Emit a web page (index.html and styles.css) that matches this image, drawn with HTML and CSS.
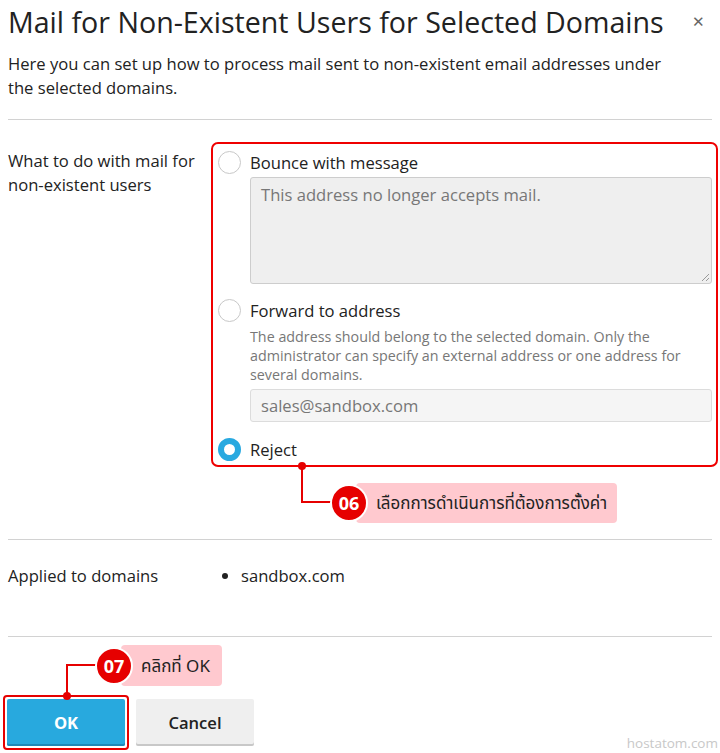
FILE: index.html
```html
<!DOCTYPE html>
<html>
<head>
<meta charset="utf-8">
<link rel="stylesheet" href="styles.css">
</head>
<body>
<div class="dialog">
  <div class="head">
    <h1 class="title">Mail for Non-Existent Users for Selected Domains</h1>
    <span class="close">&#x2715;</span>
  </div>
  <p class="intro">Here you can set up how to process mail sent to non-existent email addresses under the selected domains.</p>
  <hr class="sep">
  <div class="row row-opts">
    <div class="label">What to do with mail for non-existent users</div>
    <div class="field">
      <div class="hl-box">
        <label class="opt"><span class="radio"></span><span class="opt-text">Bounce with message</span></label>
        <div class="sub">
          <div class="textarea">This address no longer accepts mail.<span class="grip"></span></div>
        </div>
        <label class="opt"><span class="radio"></span><span class="opt-text">Forward to address</span></label>
        <div class="sub">
          <p class="hint">The address should belong to the selected domain. Only the administrator can specify an external address or one address for several domains.</p>
          <div class="input">sales@sandbox.com</div>
        </div>
        <label class="opt opt-last"><span class="radio on"></span><span class="opt-text">Reject</span></label>
        <span class="dot dot-06"></span>
        <span class="line06-v"></span>
        <span class="line06-h"></span>
      </div>
      <div class="callout callout-06"><span class="badge">06</span><span class="ctext">เลือกการดำเนินการที่ต้องการตั้งค่า</span></div>
    </div>
  </div>
  <hr class="sep sep2">
  <div class="row row-applied">
    <div class="label">Applied to domains</div>
    <ul class="domains"><li>sandbox.com</li></ul>
  </div>
  <hr class="sep sep3">
  <div class="footer">
    <div class="callout callout-07"><span class="badge">07</span><span class="ctext">คลิกที่ OK</span></div>
    <span class="line07-h"></span>
    <span class="line07-v"></span>
    <div class="buttons">
      <div class="ok-wrap"><button class="btn btn-ok">OK</button><span class="dot dot-07"></span></div>
      <button class="btn btn-cancel">Cancel</button>
    </div>
  </div>
  <div class="watermark">hostatom.com</div>
</div>
</body>
</html>
```
FILE: styles.css
```css
* { box-sizing: border-box; }
html, body { margin: 0; padding: 0; background: #fff; }
body {
  font-family: "Open Sans", "Noto Sans", sans-serif;
  color: #222;
  width: 720px;
  height: 753px;
  overflow: hidden;
}
.dialog { position: relative; padding: 0 8px; height: 753px; }
.head { display: flex; align-items: flex-start; justify-content: space-between; height: 46px; }
.title {
  margin: 0;
  padding-top: 3px;
  font-weight: 400;
  font-size: 28.6px;
  line-height: 38px;
  color: #222;
  white-space: nowrap;
}
.close { font-size: 15px; color: #666; margin-top: 11px; margin-right: 7px; }
.intro {
  margin: 6px 0 0;
  font-size: 16.6px;
  line-height: 24px;
  width: 680px;
  color: #222;
}
.sep { border: 0; border-top: 1px solid #d2d2d2; margin: 19px 0 0; height: 0; }
.row { display: flex; }
.row-opts { padding-top: 22px; height: 419px; }
.label { width: 203px; font-size: 16.6px; line-height: 24px; color: #222; padding-top: 7px; }
.field { position: relative; flex: 1; }
.hl-box {
  position: relative;
  margin-left: 0;
  margin-right: -6px;
  border: 2px solid #ef0000;
  border-radius: 7px;
  padding: 6px 4px 4px 5px;
}
.opt { display: flex; align-items: center; height: 24px; }
.radio {
  width: 23px; height: 23px;
  border: 1px solid #c8c8c8;
  border-radius: 50%;
  background: #fff;
  margin-right: 9px;
  flex: none;
}
.radio.on { border: 6px solid #28a9e0; }
.opt-text { font-size: 16.6px; color: #222; }
.sub { padding-left: 32px; }
.textarea {
  position: relative;
  margin-top: 3px;
  height: 107px;
  background: #efefef;
  border: 1px solid #cdcdcd;
  border-radius: 3px;
  padding: 5px 10px;
  font-size: 16.6px;
  color: #777;
  margin-bottom: 14px;
}
.grip {
  position: absolute; right: 2px; bottom: 2px; width: 7px; height: 7px;
  background: linear-gradient(135deg, transparent 45%, #999 45%, #999 55%, transparent 55%, transparent 75%, #999 75%, #999 85%, transparent 85%);
}
.hint { margin: 5px 0 0; font-size: 14.3px; line-height: 19px; color: #777; }
.input {
  margin-top: 5px;
  height: 33px;
  background: #f5f5f5;
  border: 1px solid #dcdcdc;
  border-radius: 3px;
  padding: 5px 10px;
  font-size: 16.6px;
  color: #777;
  line-height: 21px;
  margin-bottom: 15px;
}
.dot { position: absolute; width: 8px; height: 8px; border-radius: 50%; background: #e60000; }
.dot-06 { left: 85px; bottom: -5px; }
.line06-v { position: absolute; left: 88px; top: 100%; width: 2px; height: 38px; background: #e60000; }
.line06-h { position: absolute; left: 88px; top: calc(100% + 36px); width: 34px; height: 2px; background: #e60000; }
.callout { position: absolute; display: flex; align-items: center; }
.callout-06 { left: 119px; top: 341px; height: 40px; }
.callout .badge {
  position: relative; z-index: 2;
  width: 38px; height: 38px; border-radius: 50%;
  background: #e60000; border: 2px solid #fff;
  color: #fff; font-weight: 700; font-size: 18px;
  display: flex; align-items: center; justify-content: center;
  font-family: "Open Sans", sans-serif;
  flex: none;
}
.callout .ctext {
  background: #ffc9cf;
  margin-left: -12px;
  padding: 0 10px 0 20px;
  height: 40px;
  line-height: 40px;
  border-radius: 4px;
  font-family: "Noto Sans", "Noto Sans Thai", sans-serif;
  font-size: 17px;
  color: #222;
  white-space: nowrap;
}
.sep2 { margin-top: 0; }
.row-applied { height: 96px; padding-top: 24px; }
.row-applied .label { padding-top: 0; width: 217px; }
.domains { margin: 0; padding: 0 0 0 16px; font-size: 16.6px; line-height: 24px; }
.sep3 { margin-top: 0; }
.footer { position: relative; padding-top: 58px; }
.callout-07 { left: 87px; top: 8px; height: 41px; }
.callout-07 .ctext { padding-left: 20px; padding-right: 12px; height: 41px; line-height: 41px; }
.line07-h { position: absolute; left: 58px; top: 27px; width: 32px; height: 2px; background: #e60000; }
.line07-v { position: absolute; left: 58px; top: 27px; width: 2px; height: 31px; background: #e60000; }
.buttons { display: flex; align-items: flex-start; gap: 7px; margin-left: -5px; }
.ok-wrap { position: relative; border: 2px solid #e60000; border-radius: 4px; padding: 2px; }
.dot-07 { left: 58px; top: -5px; }
.btn {
  font-family: "Open Sans", sans-serif;
  font-size: 16.6px; font-weight: 600;
  border: 0; border-radius: 2px;
  height: 47px; width: 118px;
  display: flex; align-items: center; justify-content: center;
  padding: 0;
}
.btn-ok { background: #28a9de; color: #fff; box-shadow: inset 0 -2px 0 #1e88b8; font-weight: 700; }
.btn-cancel { background: #efefef; color: #222; box-shadow: inset 0 -2px 0 #c8c8c8; margin-top: 4px; }
.watermark {
  position: absolute; right: 2px; bottom: 1px;
  font-size: 13.5px; color: #c8c8c8; font-family: "Open Sans", sans-serif;
}
```
